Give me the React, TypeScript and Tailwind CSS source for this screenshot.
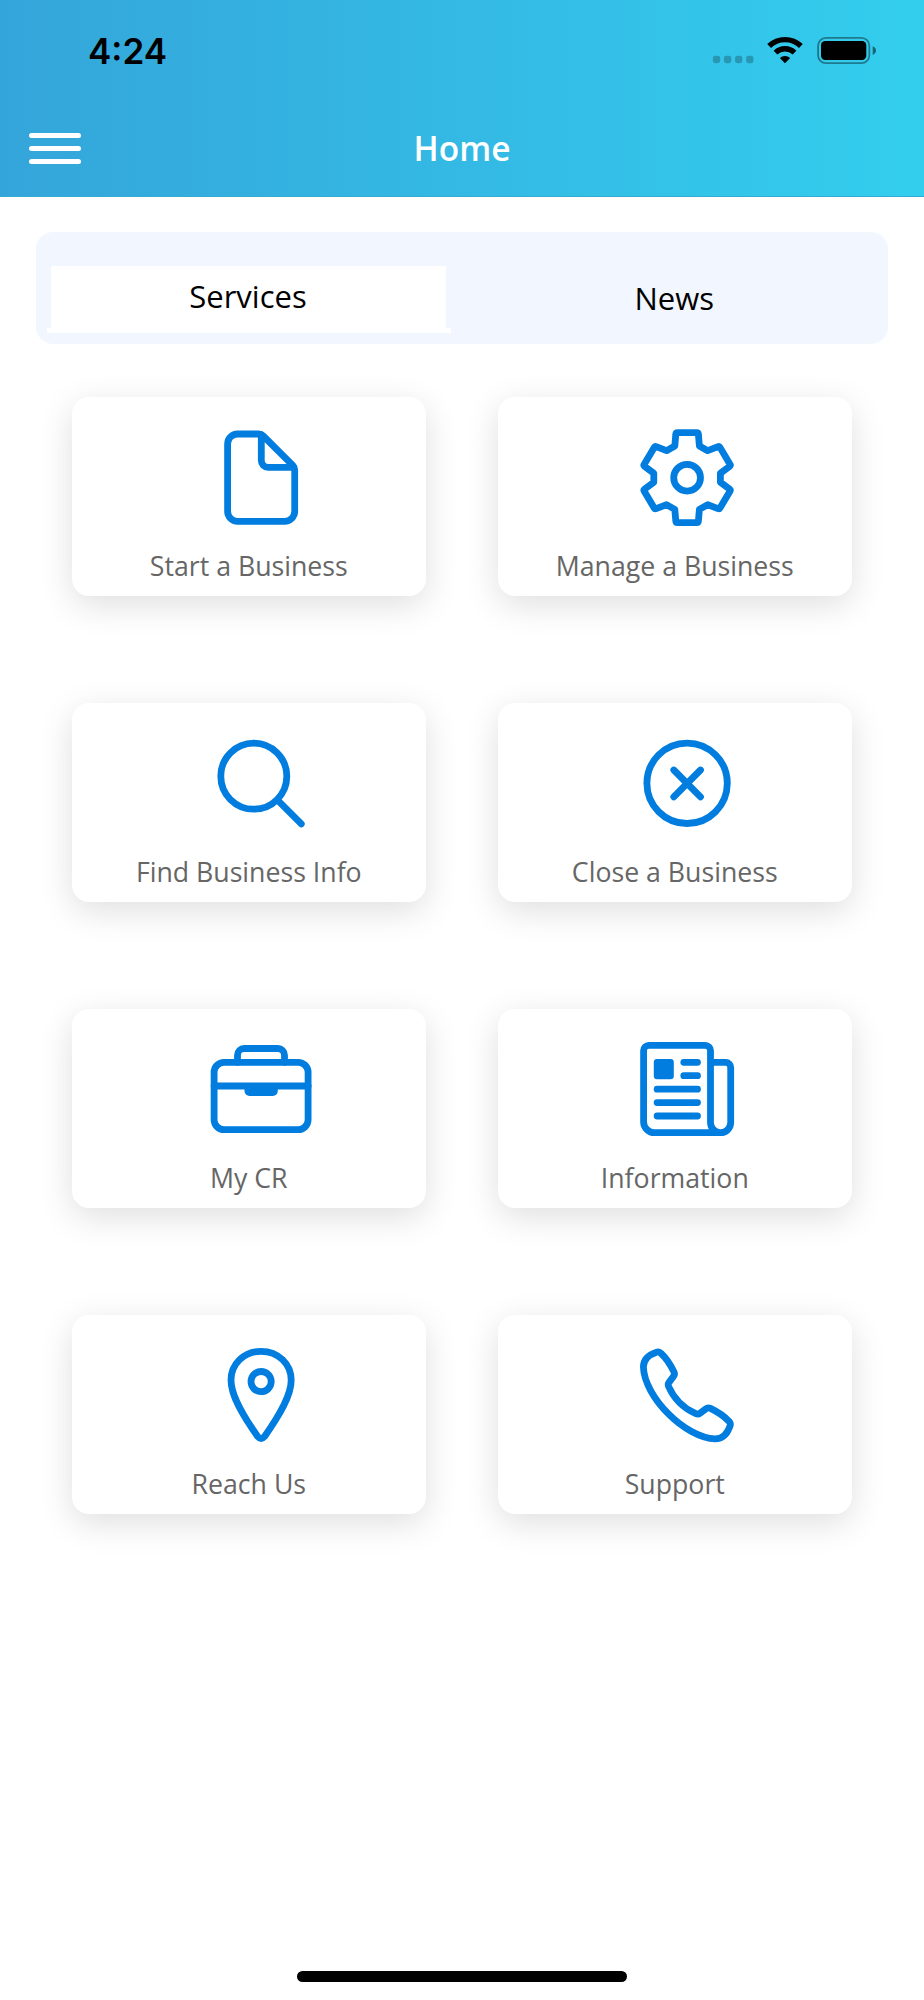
import React from "react";

const stroke = {
  fill: "none",
  stroke: "currentColor",
  strokeWidth: 6.8,
  strokeLinecap: "round" as const,
  strokeLinejoin: "round" as const,
};

function FileIcon() {
  return (
    <g {...stroke}>
      <path d="M36.6 17H57.5Q60.3 17 62.3 19L91.8 48.3Q93.7 50.3 93.7 53V94.3a10 10 0 0 1-10 10H36.6a10 10 0 0 1-10-10V27a10 10 0 0 1 10-10Z" />
      <path d="M60.3 18V43.6a6.7 6.7 0 0 0 6.7 6.7H92.5" />
    </g>
  );
}

function GearIcon() {
  return (
    <g {...stroke}>
      <path d="M50.6 15.7H69.6Q71.3 15.7 71.4 17.4L72.4 29 80.7 33.7 91 29.7Q92.3 29.2 93 30.4L103.1 47.4Q103.7 48.4 102.8 49.2L93.4 56.2V65.2L102.8 72.2Q103.7 73 103.1 74L93 91Q92.3 92.2 91 91.7L80.7 87.7 72.4 92.4 71.4 104Q71.3 105.7 69.6 105.7H50.6Q48.9 105.7 48.8 104L47.8 92.4 39.5 87.7 29.2 91.7Q27.9 92.2 27.2 91L17.1 74Q16.5 73 17.4 72.2L26.8 65.2V56.2L17.4 49.2Q16.5 48.4 17.1 47.4L27.2 30.4Q27.9 29.2 29.2 29.7L39.5 33.7 47.8 29 48.8 17.4Q48.9 15.7 50.6 15.7Z" />
      <circle cx="60.1" cy="60.7" r="13.4" />
    </g>
  );
}

function SearchIcon() {
  return (
    <g {...stroke}>
      <circle cx="52.8" cy="53.2" r="33" />
      <path d="M76.8 77.4 100.3 100.9" />
    </g>
  );
}

function CloseIcon() {
  return (
    <g {...stroke}>
      <circle cx="60.1" cy="60.3" r="40.2" />
      <path d="M46.8 47 73.5 73.8M73.5 47 46.8 73.8" />
    </g>
  );
}

function BriefcaseIcon() {
  return (
    <g {...stroke}>
      <rect x="13.1" y="33.3" width="94" height="67.4" rx="10" />
      <path d="M36.5 33.3V26.2a6.7 6.7 0 0 1 6.7-6.7H76.8a6.7 6.7 0 0 1 6.7 6.7V33.3M13.1 57H107.1" />
      <path d="M43.5 58H76.8V62a5 5 0 0 1-5 5H48.5a5 5 0 0 1-5-5Z" fill="currentColor" stroke="none" />
    </g>
  );
}

function NewspaperIcon() {
  return (
    <g {...stroke}>
      <path d="M93.6 103.7H27.6a11 11 0 0 1-11-11V21.6a5.2 5.2 0 0 1 5.2-5.2H78.3a5.2 5.2 0 0 1 5.2 5.2V93.6a10.1 10.1 0 0 0 20.2 0V38.4a5 5 0 0 0-5-5H83.5" />
      <path d="M56.8 33.3H70.5M56.8 46.7H70.5M30.1 60.2H70.5M30.1 73.6H70.5M30.1 87H70.5" />
      <rect x="26.8" y="30" width="20" height="20.2" rx="3.2" fill="currentColor" stroke="none" />
    </g>
  );
}

function PinIcon() {
  return (
    <g {...stroke}>
      <path d="M60.1 16.3C43 16.3 30 29 30 45.2 30 60.5 41.5 80 56.8 101.7Q60.1 105.7 63.4 101.7C78.7 80 90.2 60.5 90.2 45.2 90.2 29 77.2 16.3 60.1 16.3Z" />
      <circle cx="60.1" cy="46.6" r="10.1" />
    </g>
  );
}

function PhoneIcon() {
  return (
    <g {...stroke}>
      <path d="M29.5 17.2C21 20 16.4 24.5 16.4 32 17.3 62 58.3 103 88.3 103.9 95.8 103.9 100.3 99.3 103.1 90.8Q104 88.6 102 86.3C96.5 80.5 90.5 76.8 83.5 73.4Q80.8 72.1 78.7 74L73 78.3Q71.2 79.7 68.8 78.7C56.5 73.3 47 63.8 41.6 51.5Q40.6 49.1 42 47.3L46.3 41.6Q48.2 39.5 46.9 36.8C43.5 29.8 39.8 23.8 34 18.3Q31.7 16.3 29.5 17.2Z" />
    </g>
  );
}

const cards = [
  { label: "Start a Business", Icon: FileIcon },
  { label: "Manage a Business", Icon: GearIcon },
  { label: "Find Business Info", Icon: SearchIcon },
  { label: "Close a Business", Icon: CloseIcon },
  { label: "My CR", Icon: BriefcaseIcon },
  { label: "Information", Icon: NewspaperIcon },
  { label: "Reach Us", Icon: PinIcon },
  { label: "Support", Icon: PhoneIcon },
];

function StatusIcons() {
  return (
    <svg width="164" height="30" viewBox="0 0 164 30" className="shrink-0">
      <g fillOpacity="0.23">
        <rect x="0.8" y="20.8" width="7.4" height="7.4" rx="2.4" />
        <rect x="11.9" y="20.8" width="7.4" height="7.4" rx="2.4" />
        <rect x="23" y="20.8" width="7.4" height="7.4" rx="2.4" />
        <rect x="34.1" y="20.8" width="7.4" height="7.4" rx="2.4" />
      </g>
      <g fill="none" stroke="#000" strokeWidth="5.4">
        <path d="M57.1 11A23 23 0 0 1 88.9 11" />
        <path d="M63.5 17.6A13.8 13.8 0 0 1 82.5 17.6" />
      </g>
      <path d="M73 28.2 67.9 23A7.3 7.3 0 0 1 78.1 23Z" />
      <rect x="106.1" y="2.8" width="51.2" height="25.4" rx="7.8" fill="none" stroke="#000" strokeOpacity="0.4" strokeWidth="1.8" />
      <rect x="109" y="6" width="45.3" height="19" rx="4.2" />
      <path d="M160.7 11.2Q164 12.5 164 15.5T160.7 19.9Z" fillOpacity="0.5" />
    </svg>
  );
}

export default function App() {
  return (
    <div className="flex h-[2000px] w-[924px] flex-col overflow-hidden bg-white font-['Open_Sans',sans-serif]">
      <header className="flex h-[196.5px] shrink-0 flex-col border-b border-[#35a9cf] bg-linear-to-r from-[#34a5da] to-[#33ceee]">
        <div className="flex h-[101px] shrink-0 items-start justify-between pt-[35px] pr-[48px] pl-[88px]">
          <span className="font-['Inter',sans-serif] text-[35px] leading-[32px] font-semibold text-black">4:24</span>
          <StatusIcons />
        </div>
        <div className="grid h-[95px] shrink-0 grid-cols-[1fr_auto_1fr] items-center px-[29px]">
          <button aria-label="Menu" className="flex w-[52px] flex-col gap-2">
            <span className="h-[5px] rounded-full bg-white" />
            <span className="h-[5px] rounded-full bg-white" />
            <span className="h-[5px] rounded-full bg-white" />
          </button>
          <h1 className="pb-px text-[33.5px] leading-[40px] font-semibold text-white">Home</h1>
        </div>
      </header>

      <nav className="mx-[36px] mt-[35.5px] flex h-[112px] shrink-0 rounded-[17px] bg-[#f2f7ff] text-black">
        <button className="ml-[10.5px] flex w-[404px] flex-col items-center pt-[34px]">
          <span className="flex h-[62px] w-[395px] items-center justify-center bg-white pr-px pb-[2px] text-[31px]">Services</span>
          <span className="h-[5px] w-full bg-white" />
        </button>
        <button className="flex flex-1 justify-center pt-[44px] pl-[10px] text-[31px] leading-[44px]">News</button>
      </nav>

      <main className="mt-[53px] grid grid-cols-[354.4px_354.4px] gap-x-[71.6px] gap-y-[106.9px] pl-[71.6px]">
        {cards.map(({ label, Icon }) => (
          <button
            key={label}
            className="flex h-[199px] flex-col items-center rounded-[17px] bg-white pt-5 shadow-[0_9px_34px_rgba(0,0,0,0.13)]"
          >
            <svg width="120" height="120" viewBox="0 0 120 120" className="ml-6 shrink-0 text-[#007ddf]">
              <Icon />
            </svg>
            <span className="mt-[11px] text-[26.7px] leading-[36px] text-[#666]">{label}</span>
          </button>
        ))}
      </main>

      <div className="mx-auto mt-auto mb-[18px] h-[11px] w-[330px] shrink-0 rounded-full bg-black" />
    </div>
  );
}
